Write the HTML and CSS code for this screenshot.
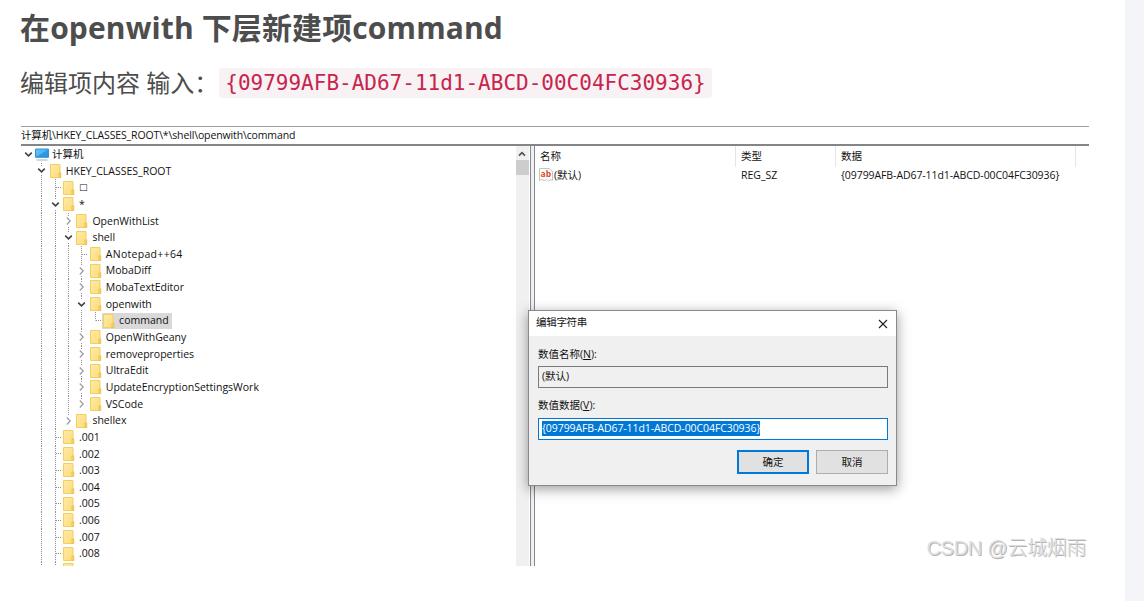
FILE: index.html
```html
<!DOCTYPE html>
<html lang="zh-CN">
  <head>
    <meta charset="UTF-8" />
    <meta name="viewport" content="width=device-width, initial-scale=1.0" />
    <title>openwith command</title>
    <link rel="stylesheet" href="styles.css">
  </head>
  <body>
    <!-- icons -->
    <svg class="defs">
      <defs>
        <linearGradient id="paper" x1="0" y1="0" x2="1" y2="1">
          <stop offset="0" stop-color="#ffeaa6" />
          <stop offset="1" stop-color="#fddc78" />
        </linearGradient>
        <linearGradient id="glass" x1="0" y1="0" x2="1" y2="1">
          <stop offset="0" stop-color="#66c6f8" />
          <stop offset="0.5" stop-color="#4db5f2" />
          <stop offset="0.52" stop-color="#2b9ae6" />
          <stop offset="1" stop-color="#2792e0" />
        </linearGradient>
      </defs>
      <symbol id="folder" viewBox="0 0 12 14">
        <path d="M0.5 0.5H10V8.6H10.6V13.5H0.5Z" fill="url(#paper)" stroke="#f2cf63" />
        <path d="M8.9 13.5V9H10.7V13.5Z" fill="#f8d66d" stroke="#e8bd43" stroke-width="0.7" />
      </symbol>
      <symbol id="down" viewBox="0 0 9 7">
        <path d="M1.2 1.6L4.5 4.9L7.8 1.6" fill="none" stroke="#404040" stroke-width="1.5" />
      </symbol>
      <symbol id="right" viewBox="0 0 7 9">
        <path d="M1.8 1L5.2 4.5L1.8 8" fill="none" stroke="#a0a0a0" stroke-width="1.3" />
      </symbol>
    </svg>

    <div class="article">
      <h2 class="title">在openwith 下层新建项command</h2>
      <p class="desc">编辑项内容 输入：<code>{09799AFB-AD67-11d1-ABCD-00C04FC30936}</code></p>

      <div class="regedit">
        <div class="address">计算机\HKEY_CLASSES_ROOT\*\shell\openwith\command</div>
        <div class="panes">
          <!-- tree start -->
          <div class="tree">
            <div class="row"><i class="open"><svg><use href="#down" /></svg></i>
              <svg class="pc" viewBox="0 0 14 13">
                <path d="M0.5 1H13.5V9.3H0.5Z" fill="url(#glass)" stroke="#3a8fca" />
                <path d="M1.5 12H12.5" stroke="#a9c3d4" stroke-width="1.2" />
              </svg><span class="cn">计算机</span></div>
            <div class="row"><i></i><i class="line open"><svg><use href="#down" /></svg></i><svg class="folder"><use href="#folder" /></svg><span>HKEY_CLASSES_ROOT</span></div>
            <div class="row"><i></i><i class="line"></i><i class="line tee"></i><svg class="folder"><use href="#folder" /></svg><span class="box">□</span></div>
            <div class="row"><i></i><i class="line"></i><i class="line open"><svg><use href="#down" /></svg></i><svg class="folder"><use href="#folder" /></svg><span>*</span></div>
            <div class="row"><i></i><i class="line"></i><i class="line"></i><i class="line shut"><svg><use href="#right" /></svg></i><svg class="folder"><use href="#folder" /></svg><span>OpenWithList</span></div>
            <div class="row"><i></i><i class="line"></i><i class="line"></i><i class="line open"><svg><use href="#down" /></svg></i><svg class="folder"><use href="#folder" /></svg><span>shell</span></div>
            <div class="row"><i></i><i class="line"></i><i class="line"></i><i class="line"></i><i class="line tee"></i><svg class="folder"><use href="#folder" /></svg><span class="wide">ANotepad++64</span></div>
            <div class="row"><i></i><i class="line"></i><i class="line"></i><i class="line"></i><i class="line shut"><svg><use href="#right" /></svg></i><svg class="folder"><use href="#folder" /></svg><span>MobaDiff</span></div>
            <div class="row"><i></i><i class="line"></i><i class="line"></i><i class="line"></i><i class="line shut"><svg><use href="#right" /></svg></i><svg class="folder"><use href="#folder" /></svg><span>MobaTextEditor</span></div>
            <div class="row"><i></i><i class="line"></i><i class="line"></i><i class="line"></i><i class="line open"><svg><use href="#down" /></svg></i><svg class="folder"><use href="#folder" /></svg><span>openwith</span></div>
            <div class="row"><i></i><i class="line"></i><i class="line"></i><i class="line"></i><i class="line"></i><i class="line half tee"></i><div class="selected"><svg class="folder"><use href="#folder" /></svg><span>command</span></div></div>
            <div class="row"><i></i><i class="line"></i><i class="line"></i><i class="line"></i><i class="line shut"><svg><use href="#right" /></svg></i><svg class="folder"><use href="#folder" /></svg><span>OpenWithGeany</span></div>
            <div class="row"><i></i><i class="line"></i><i class="line"></i><i class="line"></i><i class="line shut"><svg><use href="#right" /></svg></i><svg class="folder"><use href="#folder" /></svg><span>removeproperties</span></div>
            <div class="row"><i></i><i class="line"></i><i class="line"></i><i class="line"></i><i class="line shut"><svg><use href="#right" /></svg></i><svg class="folder"><use href="#folder" /></svg><span>UltraEdit</span></div>
            <div class="row"><i></i><i class="line"></i><i class="line"></i><i class="line"></i><i class="line shut"><svg><use href="#right" /></svg></i><svg class="folder"><use href="#folder" /></svg><span>UpdateEncryptionSettingsWork</span></div>
            <div class="row"><i></i><i class="line"></i><i class="line"></i><i class="line"></i><i class="line half shut"><svg><use href="#right" /></svg></i><svg class="folder"><use href="#folder" /></svg><span>VSCode</span></div>
            <div class="row"><i></i><i class="line"></i><i class="line"></i><i class="line half shut"><svg><use href="#right" /></svg></i><svg class="folder"><use href="#folder" /></svg><span>shellex</span></div>
            <div class="row"><i></i><i class="line"></i><i class="line tee"></i><svg class="folder"><use href="#folder" /></svg><span>.001</span></div>
            <div class="row"><i></i><i class="line"></i><i class="line tee"></i><svg class="folder"><use href="#folder" /></svg><span>.002</span></div>
            <div class="row"><i></i><i class="line"></i><i class="line tee"></i><svg class="folder"><use href="#folder" /></svg><span>.003</span></div>
            <div class="row"><i></i><i class="line"></i><i class="line tee"></i><svg class="folder"><use href="#folder" /></svg><span>.004</span></div>
            <div class="row"><i></i><i class="line"></i><i class="line tee"></i><svg class="folder"><use href="#folder" /></svg><span>.005</span></div>
            <div class="row"><i></i><i class="line"></i><i class="line tee"></i><svg class="folder"><use href="#folder" /></svg><span>.006</span></div>
            <div class="row"><i></i><i class="line"></i><i class="line tee"></i><svg class="folder"><use href="#folder" /></svg><span>.007</span></div>
            <div class="row"><i></i><i class="line"></i><i class="line tee"></i><svg class="folder"><use href="#folder" /></svg><span>.008</span></div>
            <div class="row"><i></i><i class="line"></i><i class="line"></i><svg class="folder"><use href="#folder" /></svg></div>
          </div>
          <!-- tree end -->

          <div class="scrollbar">
            <svg viewBox="0 0 12 14"><path d="M3 9.6L6 6.6L9 9.6" fill="none" stroke="#505050" stroke-width="1.6" /></svg>
            <div class="thumb"></div>
          </div>
          <div class="splitter"></div>

          <!-- value list -->
          <div class="list">
            <div class="list-row head">
              <div>名称</div>
              <div>类型</div>
              <div>数据</div>
            </div>
            <div class="list-row">
              <div class="name">
                <svg class="ab" viewBox="0 0 14 14">
                  <path d="M0.5 0.5H10.5L13.5 3.5V12.5L11.5 11.5L9.5 13L7.5 11.5L5 13L3 11.5L0.5 12.5Z" fill="#fff" stroke="#b4b4b4" stroke-width="0.8" />
                  <text x="1.6" y="8.8" class="ab-text">ab</text>
                </svg>(默认)</div>
              <div>REG_SZ</div>
              <div class="guid">{09799AFB-AD67-11d1-ABCD-00C04FC30936}</div>
            </div>
          </div>
        </div>

        <!-- edit string dialog -->
        <div class="dialog">
          <div class="dialog-title">
            <span>编辑字符串</span>
            <svg viewBox="0 0 10 10"><path d="M1 1L9 9M9 1L1 9" stroke="#222" stroke-width="1.1" /></svg>
          </div>
          <div class="dialog-body">
            <label>数值名称(<u>N</u>):</label>
            <div class="field readonly">(默认)</div>
            <label class="data-label">数值数据(<u>V</u>):</label>
            <div class="field active"><span class="mark guid">{09799AFB-AD67-11d1-ABCD-00C04FC30936}</span></div>
            <div class="buttons">
              <button class="btn primary">确定</button>
              <button class="btn">取消</button>
            </div>
          </div>
        </div>

        <div class="watermark">CSDN @云城烟雨</div>
      </div>
    </div>
  </body>
</html>
```

FILE: styles.css
```css
* {
    margin: 0;
    padding: 0;
    box-sizing: border-box;
}

body {
    height: 601px;
    overflow: hidden;
    background: #f4f5f8;
    font-family: "Open Sans", "Noto Sans CJK SC", sans-serif;
}

.defs {
    position: absolute;
    width: 0;
    height: 0;
}

.article {
    width: 1125px;
    height: 601px;
    padding: 8px 0 0 21px;
    background: #fff;
    color: #4d4d4d;
}

.title {
    height: 40px;
    margin-left: -1px;
    line-height: 40px;
    font-size: 30px;
    letter-spacing: 0.13px;
    white-space: nowrap;
}

.desc {
    display: flex;
    align-items: center;
    height: 36px;
    margin-top: 17px;
    margin-left: -1px;
    font-size: 24px;
    line-height: 34px;
    white-space: nowrap;
}

code {
    height: 30px;
    padding: 0 6px;
    margin-left: 1px;
    border-radius: 3px;
    background: #f9f2f4;
    color: #c7254e;
    font-family: "DejaVu Sans Mono", monospace;
    font-size: 21px;
    line-height: 31px;
}

/* registry editor */
.regedit {
    position: relative;
    width: 1068px;
    height: 441px;
    margin-top: 25px;
    border-top: 1px solid #a0a0a0;
    font-size: 10.5px;
    color: #111;
    white-space: nowrap;
}

.address {
    height: 19px;
    margin-right: 0;
    line-height: 17px;
    border-bottom: 2px solid #848588;
    letter-spacing: -0.13px;
}

.panes {
    display: flex;
    height: 420px;
}

.tree {
    width: 495px;
    height: 420px;
    overflow: hidden;
}

.row {
    display: flex;
    align-items: center;
    height: 16.65px;
    line-height: 16.65px;
}

.row > i {
    display: flex;
    align-items: center;
    justify-content: center;
    flex: none;
    width: 13.35px;
    height: 100%;
}

.row > i:first-child {
    width: 14px;
}

.row > i svg {
    flex: none;
    background: #fff;
}

.open svg {
    width: 9px;
    height: 9px;
}

.shut svg {
    width: 7px;
    height: 10px;
}

/* dotted guides */
.line {
    background: repeating-linear-gradient(#909090 0 1px, transparent 1px 2px) 50% 0 / 1px 100% no-repeat;
}

.line.half {
    background-size: 1px 50%;
}

.line.tee {
    background:
        repeating-linear-gradient(#909090 0 1px, transparent 1px 2px) 50% 0 / 1px 100% no-repeat,
        repeating-linear-gradient(90deg, #909090 0 1px, transparent 1px 2px) 100% 50% / 6px 1px no-repeat;
}

.line.half.tee {
    background-size: 1px 50%, 6px 1px;
}

.folder {
    flex: none;
    width: 12px;
    height: 14px;
    margin-right: 4px;
    margin-left: 1.4px;
}

.pc {
    width: 14px;
    height: 13px;
    margin-right: 3px;
}

.wide {
    letter-spacing: 0.3px;
}

.box {
    font-family: "DejaVu Sans", sans-serif;
    font-size: 9px;
}

.selected {
    display: flex;
    align-items: center;
    height: 16px;
    padding-right: 3px;
    background: #d9d9d9;
}

.scrollbar {
    width: 13px;
    background: #f0f0f0;
}

.scrollbar svg {
    display: block;
    width: 12px;
    height: 14px;
}

.thumb {
    height: 15px;
    background: #cdcdcd;
}

.splitter {
    width: 5px;
    margin: 0 0 0 1px;
    border-right: 1px solid #828790;
    border-left: 1px solid #828790;
    background: #f0f0f0;
}

.list {
    flex: 1;
}

.list-row {
    display: grid;
    grid-template-columns: 201px 100px 240px;
    height: 18px;
    line-height: 18px;
}

.list-row > div {
    padding-left: 5px;
}

.guid {
    letter-spacing: -0.08px;
}

.head {
    height: 20px;
    line-height: 21px;
}

.head > div {
    border-right: 1px solid #e5e5e5;
}

.list-row > .name {
    display: flex;
    align-items: center;
    padding-left: 4px;
}

.ab {
    width: 14px;
    height: 14px;
    margin-right: 1px;
}

.ab-text {
    font-size: 8.5px;
    font-weight: bold;
    fill: #e04a28;
}

/* dialog */
.dialog {
    position: absolute;
    top: 183px;
    left: 507px;
    width: 369px;
    height: 176px;
    border: 1px solid #8a8a8a;
    background: #f0f0f0;
    box-shadow: 0 3px 12px rgba(0, 0, 0, 0.4);
}

.dialog-title {
    display: flex;
    align-items: center;
    justify-content: space-between;
    height: 25px;
    padding: 0 8px 0 7px;
    background: #fff;
    line-height: 13px;
}

.dialog-title span {
    padding-bottom: 2px;
    letter-spacing: -0.3px;
}

.dialog-title svg {
    width: 10px;
    height: 10px;
}

.dialog-body {
    padding: 9px 8px 0 9px;
}

label {
    display: block;
    height: 21px;
    line-height: 18px;
}

.data-label {
    height: 22px;
}

.field {
    display: flex;
    height: 22px;
    margin-bottom: 8px;
    padding: 2px 3px;
    border: 1px solid #7a7a7a;
    line-height: 15px;
}

.field.active {
    margin-bottom: 10px;
    border-color: #0078d7;
    background: #fff;
}

.mark {
    height: 15px;
    background: #0078d7;
    color: #fff;
}

.buttons {
    display: flex;
    justify-content: flex-end;
    gap: 7px;
}

.btn {
    width: 72px;
    height: 24px;
    border: 1px solid #adadad;
    background: #e1e1e1;
    color: #111;
    font-family: inherit;
    font-size: 10.5px;
    line-height: 20px;
}

.btn.primary {
    border: 2px solid #0078d7;
}

.watermark {
    position: absolute;
    right: 3px;
    bottom: 4px;
    color: #dedede;
    font-family: "Liberation Sans", "Noto Sans CJK SC", sans-serif;
    font-size: 20px;
    font-weight: 300;
    line-height: 30px;
    letter-spacing: -0.3px;
    text-shadow: 1px 1px 0 #b4b4b4;
}
```
